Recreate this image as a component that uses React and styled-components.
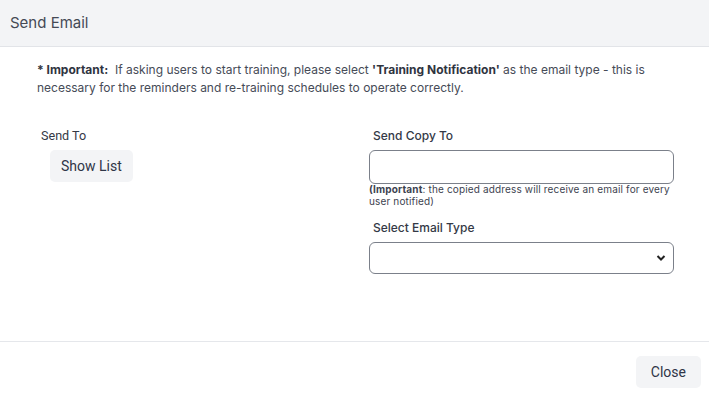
import React from "react";
import styled, { createGlobalStyle } from "styled-components";

const Global = createGlobalStyle`
  html, body { margin: 0; padding: 0; background: #fff; }
  body { font-family: "Inter", "Liberation Sans", sans-serif; }
  * { box-sizing: border-box; }
`;

const Modal = styled.div`
  width: 709px;
  height: 395px;
  display: flex;
  flex-direction: column;
  background: #fff;
`;

const Header = styled.div`
  height: 47px;
  background: #f3f4f6;
  border-bottom: 1px solid #e2e4e8;
  display: flex;
  align-items: center;
  padding: 0 10px 2px;
`;

const Title = styled.h2`
  margin: 0;
  font-family: "Inter", sans-serif;
  font-size: 15px;
  font-weight: 400;
  color: #454a55;
`;

const Body = styled.div`
  flex: 1;
  padding: 14px 0 0 37px;
  border-bottom: 1px solid #e5e7eb;
`;

const Notice = styled.p`
  margin: 0;
  font-family: "Inter", sans-serif;
  font-size: 12px;
  line-height: 18px;
  color: #464b57;
  width: 640px;
  b { font-weight: 700; color: #2f3440; }
`;

const Row = styled.div`
  display: grid;
  grid-template-columns: 328px 305px;
  padding-left: 4px;
  margin-top: 31px;
`;

const Col = styled.div`
  display: flex;
  flex-direction: column;
`;

const Label = styled.label`
  font-family: ${p => (p.$alt ? '"Inter", sans-serif' : '"Roboto", sans-serif')};
  font-size: ${p => (p.$alt ? "12px" : "12.6px")};
  font-weight: ${p => (p.$alt ? 500 : 400)};
  color: #343946;
  line-height: 16px;
  padding-left: ${p => (p.$indent ? "4px" : "0")};
  margin-top: ${p => p.$top || "0px"};
  margin-bottom: ${p => p.$bottom || "0px"};
`;

const GreyButton = styled.button`
  align-self: flex-start;
  margin-left: ${p => p.$indent || "0px"};
  height: 32px;
  padding: 0 ${p => p.$padX || "11px"};
  border: none;
  border-radius: 5px;
  background: #f3f4f6;
  font-family: "Roboto", sans-serif;
  font-size: 14px;
  color: #2f3547;
  cursor: pointer;
`;

const Input = styled.input`
  width: 305px;
  height: 34px;
  border: 1px solid #7b808a;
  border-radius: 6px;
  background: #fff;
`;

const Note = styled.div`
  font-family: "Inter", sans-serif;
  font-size: 10px;
  letter-spacing: 0.15px;
  line-height: 12.2px;
  color: #3d4350;
  margin-top: -1px;
  b { font-weight: 700; }
`;

const SelectWrap = styled.div`
  position: relative;
  width: 305px;
  height: 32px;
  border: 1px solid #7b808a;
  border-radius: 6px;
  background: #fff;
`;

const Chevron = styled.svg`
  position: absolute;
  right: 7px;
  top: 11px;
`;

const Footer = styled.div`
  height: 53px;
  display: flex;
  justify-content: flex-end;
  align-items: flex-start;
  padding: 14px 8px 0 0;
`;

export default function App() {
  return (
    <Modal>
      <Global />
      <Header>
        <Title>Send Email</Title>
      </Header>
      <Body>
        <Notice>
          <b>* Important:</b>&nbsp; If asking users to start training, please select{" "}
          <b>'Training Notification'</b> as the email type - this is
          <br />
          necessary for the reminders and re-training schedules to operate correctly.
        </Notice>
        <Row>
          <Col>
            <Label $bottom="6px">Send To</Label>
            <GreyButton $indent="9px">Show List</GreyButton>
          </Col>
          <Col>
            <Label $alt $indent $bottom="6px">Send Copy To</Label>
            <Input type="text" />
            <Note>
              <b>(Important</b>: the copied address will receive an email for every
              <br />
              user notified)
            </Note>
            <Label $alt $indent $top="13px" $bottom="6px">Select Email Type</Label>
            <SelectWrap>
              <Chevron width="10" height="8" viewBox="0 0 10 8">
                <path d="M1.5 2 L5 5.5 L8.5 2" fill="none" stroke="#222" strokeWidth="2" />
              </Chevron>
            </SelectWrap>
          </Col>
        </Row>
      </Body>
      <Footer>
        <GreyButton $padX="15px">Close</GreyButton>
      </Footer>
    </Modal>
  );
}
